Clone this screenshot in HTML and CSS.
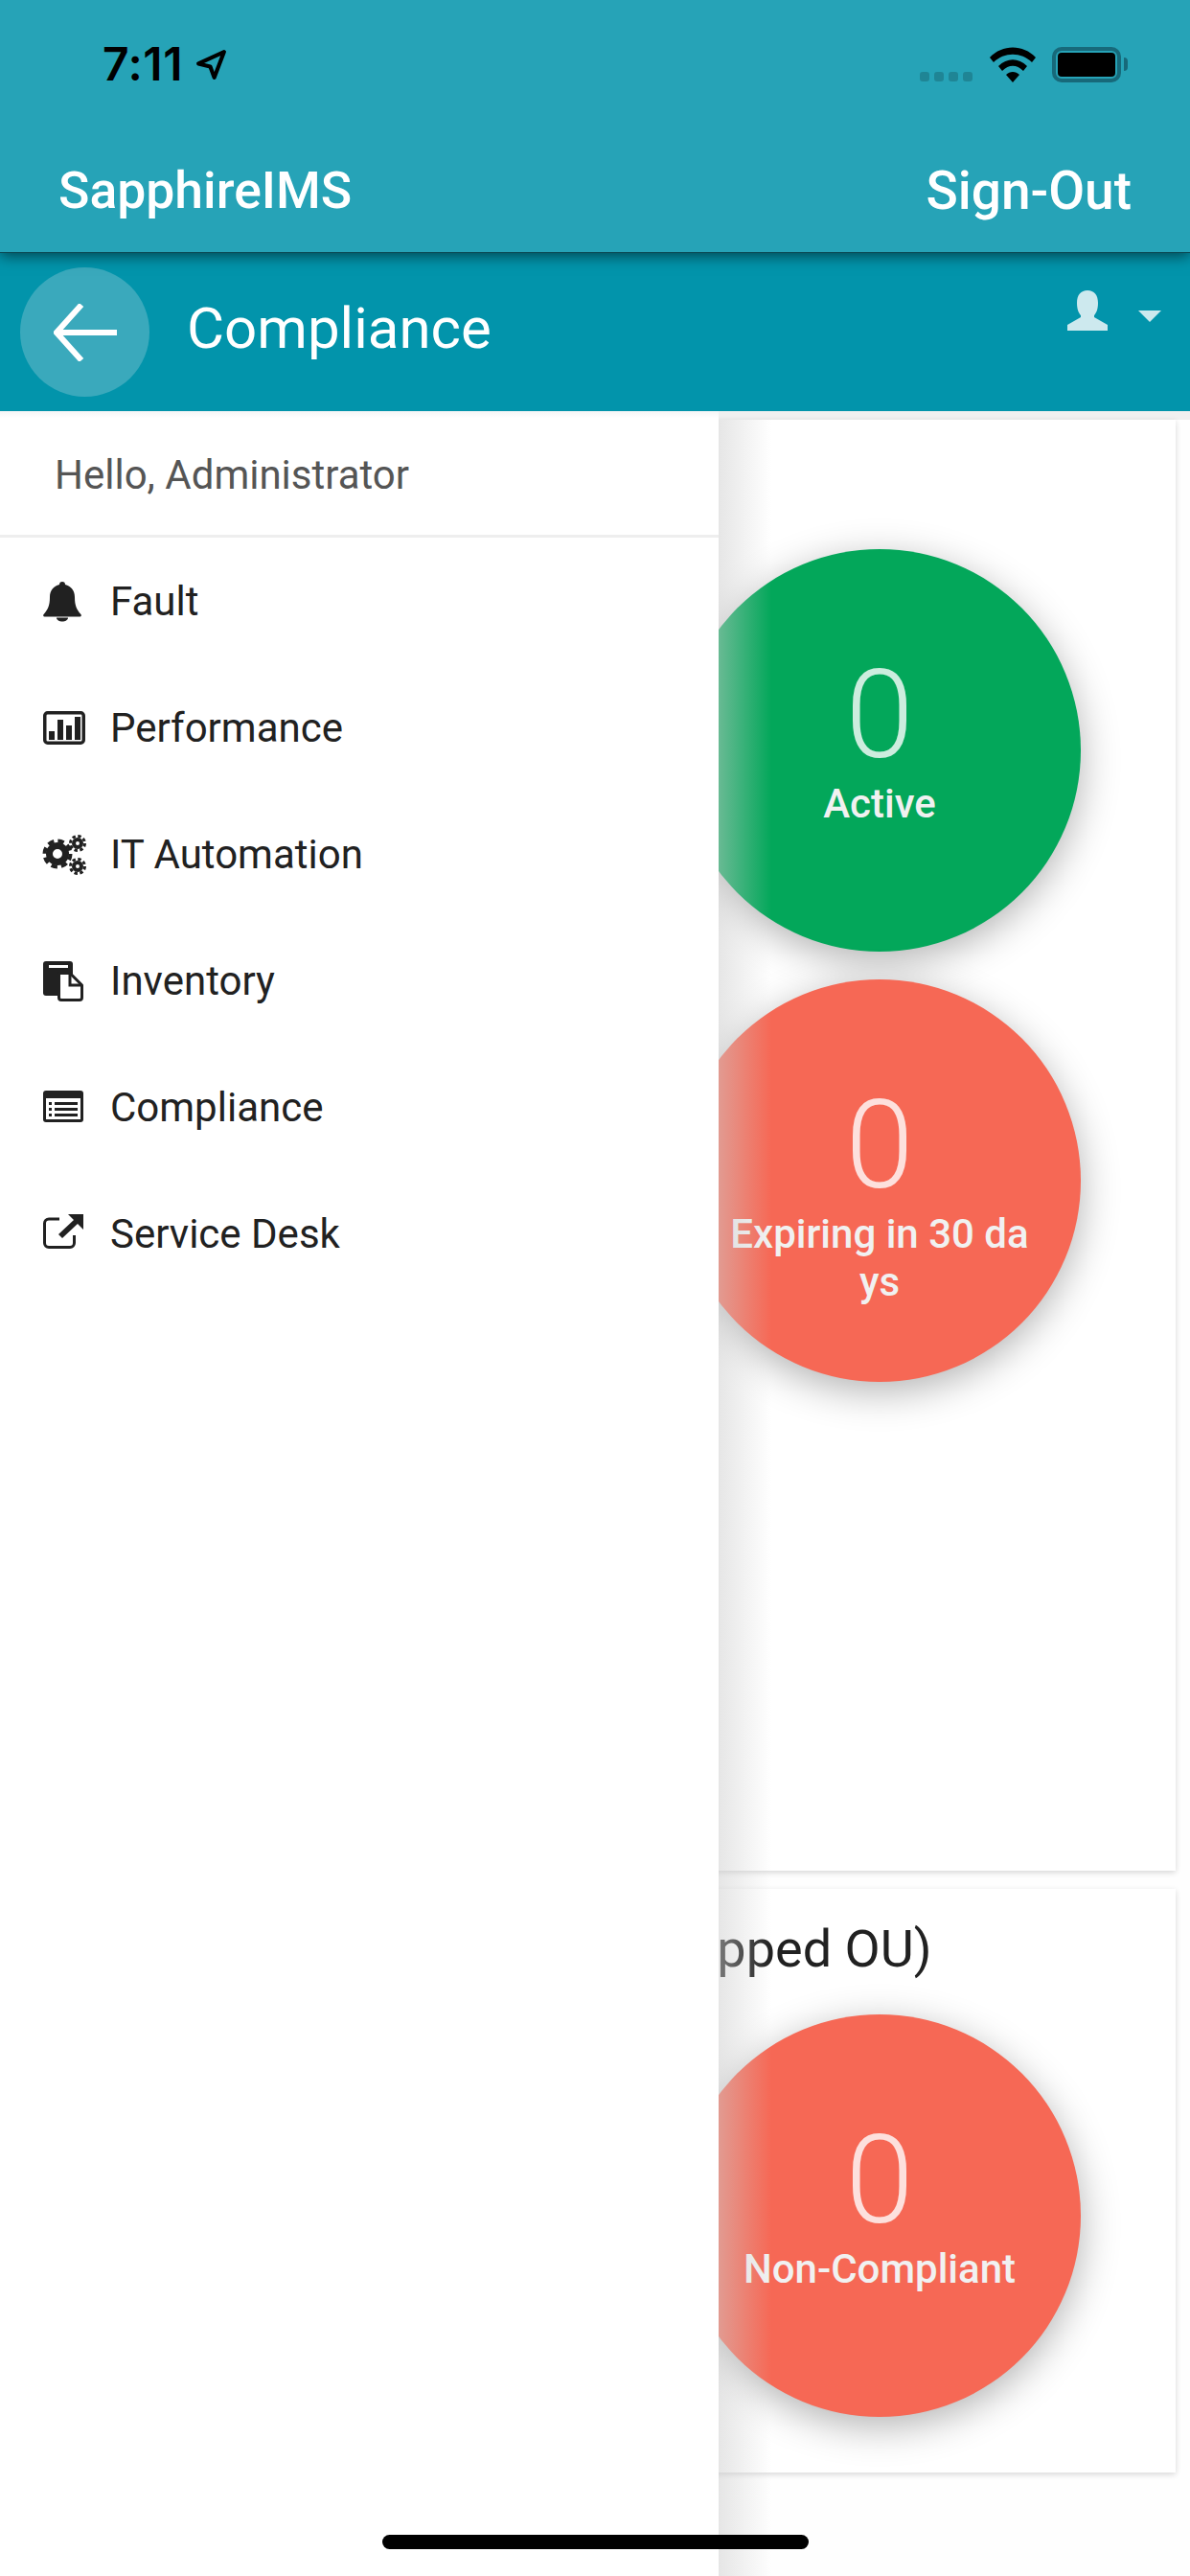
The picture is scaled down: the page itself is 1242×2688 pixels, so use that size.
FILE: index.html
```html
<!DOCTYPE html>
<html lang="en">
<head>
    <meta charset="UTF-8">
    <meta name="viewport" content="width=device-width, initial-scale=1.0">
    <title>SapphireIMS - Compliance</title>
    <link rel="stylesheet" href="styles.css">
</head>
<body>
    <div class="app">
        <header class="topbar">
            <div class="status">
                <div class="clock">
                    <span>7:11</span>
                    <svg class="loc" viewBox="0 0 32 32"><path d="M29 3 L3 15 L15 18 L19 29 Z" fill="none" stroke="#000" stroke-width="4" stroke-linejoin="round"/></svg>
                </div>
                <div class="status-right">
                    <div class="signal"><i></i><i></i><i></i><i></i></div>
                    <svg class="wifi" viewBox="0 0 50 37">
                        <path d="M1 11 C14 -3 36 -3 49 11 L45 16 C34 5 16 5 5 16 Z"/>
                        <path d="M10 20 C19 11 31 11 40 20 L36 25 C29 18 21 18 14 25 Z"/>
                        <path d="M18 29 C22 25 28 25 32 29 L25 37 Z"/>
                    </svg>
                    <div class="battery"><b></b></div>
                    <div class="battery-cap"></div>
                </div>
            </div>
            <div class="brand-row">
                <span>SapphireIMS</span>
                <span class="sign-out">Sign-Out</span>
            </div>
        </header>

        <div class="subbar">
            <div class="back">
                <svg viewBox="0 0 66 60" width="66" height="60"><path d="M66 30 H3 M29 1 L3 30 L29 59" fill="none" stroke="#fff" stroke-width="6"/></svg>
            </div>
            <h1>Compliance</h1>
            <div class="user">
                <svg viewBox="0 0 42 42" width="42" height="42"><path d="M21 0 C28 0 32 5 32 13 C32 20 30 24 28 26 V28 L42 36 V42 H0 V36 L14 28 V26 C12 24 10 20 10 13 C10 5 14 0 21 0 Z" fill="#cde9ee"/></svg>
                <div class="caret"></div>
            </div>
        </div>

        <main class="content">
            <section class="card card-top">
                <div class="gauges">
                    <div class="gauge green"><strong>0</strong><span>Active</span></div>
                    <div class="gauge red"><strong>0</strong><span>Expiring in 30 da<br>ys</span></div>
                </div>
            </section>
            <section class="card card-bottom">
                <h2>Compliance (Mapped OU)</h2>
                <div class="gauges">
                    <div class="gauge red"><strong>0</strong><span>Non-Compliant</span></div>
                </div>
            </section>
        </main>

        <nav class="drawer">
            <div class="hello">Hello, Administrator</div>
            <a class="item">
                <svg viewBox="-1 -3 46 46"><path d="M20 0 C18 0 17 1.2 17 3 C11 4.5 7 9 7 16 C7 25 5 29 .6 34 C-.3 35 .3 36.5 1.5 36.5 H38.5 C39.7 36.5 40.3 35 39.4 34 C35 29 33 25 33 16 C33 9 29 4.5 23 3 C23 1.2 22 0 20 0 Z" fill="#212121"/><path d="M14 37.5 C14 40 17 41.5 20 41.5 C23 41.5 26 40 26 37.5 Z" fill="#212121"/></svg>
                Fault
            </a>
            <a class="item">
                <svg viewBox="-1 -6 46 46"><rect x="1.75" y="1.75" width="40.5" height="31.5" rx="3" fill="none" stroke="#212121" stroke-width="3.5"/><path d="M6 21h6v9H6zM15 9h6v21h-6zM24 15h6v15h-6zM33 6h6v24h-6z" fill="#212121"/></svg>
                Performance
            </a>
            <a class="item">
                <svg viewBox="-1 -3 46 46">
                    <circle cx="15" cy="20" r="8.5" fill="none" stroke="#212121" stroke-width="7"/>
                    <circle cx="15" cy="20" r="13.5" fill="none" stroke="#212121" stroke-width="4" stroke-dasharray="6.5 4.1"/>
                    <circle cx="36" cy="9" r="4" fill="none" stroke="#212121" stroke-width="4"/>
                    <circle cx="36" cy="9" r="7.5" fill="none" stroke="#212121" stroke-width="3" stroke-dasharray="3.4 2.5"/>
                    <circle cx="36" cy="33" r="4" fill="none" stroke="#212121" stroke-width="4"/>
                    <circle cx="36" cy="33" r="7.5" fill="none" stroke="#212121" stroke-width="3" stroke-dasharray="3.4 2.5"/>
                </svg>
                IT Automation
            </a>
            <a class="item">
                <svg viewBox="-1 -3 46 46"><rect width="31" height="36" rx="3" fill="#212121"/><rect x="6" y="4" width="20" height="3" fill="#fff"/><path d="M16.5 12.5 H28 L40.5 25 V38 C40.5 39.5 39.5 40.5 38 40.5 H19 C17.5 40.5 16.5 39.5 16.5 38 Z" fill="#fff" stroke="#212121" stroke-width="3" stroke-linejoin="round"/><path d="M28 12.5 V25 H40.5" fill="none" stroke="#212121" stroke-width="3"/></svg>
                Inventory
            </a>
            <a class="item">
                <svg viewBox="-1 -6 46 46"><rect width="42" height="33" rx="3" fill="#212121"/><rect x="3" y="8" width="36" height="22" fill="#fff"/><path d="M6 12h3v3H6zM12 12h24v3H12zM6 18h3v3H6zM12 18h24v3H12zM6 24h3v3H6zM12 24h24v3H12z" fill="#212121"/></svg>
                Compliance
            </a>
            <a class="item">
                <svg viewBox="-1 -3 46 46"><path d="M17 5 H6 C3.5 5 1.5 7 1.5 9.5 V30 C1.5 32.5 3.5 34.5 6 34.5 H28 C30.5 34.5 32.5 32.5 32.5 30 V22" fill="none" stroke="#212121" stroke-width="3"/><path d="M42 0 V16 L36 10 L20 25 L16 21 L32 6 L26 0 Z" fill="#212121"/></svg>
                Service Desk
            </a>
        </nav>
        <div class="drawer-shade"></div>
        <div class="home-bar"></div>
    </div>
</body>
</html>
```
FILE: styles.css
```css
* {
    box-sizing: border-box;
}
body {
    margin: 0;
    font-family: Roboto, Arial, sans-serif;
    background-color: #fff;
}
.app {
    position: relative;
    width: 1242px;
    height: 2688px;
    overflow: hidden;
    display: flex;
    flex-direction: column;
}
.topbar {
    height: 264px;
    background-color: #26a3b7;
    position: relative;
    z-index: 3;
    box-shadow: 0 3px 14px rgba(0,0,0,0.55);
    border-bottom: 1px solid #0a4a55;
}
.status {
    height: 136px;
    padding: 44px 65px 0 107px;
    display: flex;
    justify-content: space-between;
    align-items: flex-start;
}
.clock {
    display: flex;
    align-items: center;
    gap: 13px;
    font-family: Inter, Arial, sans-serif;
    font-size: 48px;
    line-height: 46px;
    letter-spacing: 0.5px;
    font-weight: 600;
    color: #000;
}
.loc {
    width: 33px;
    height: 33px;
}
.status-right {
    display: flex;
    align-items: flex-start;
    padding-top: 5px;
}
.signal {
    display: flex;
    gap: 5px;
    margin: 26px 17px 0 0;
}
.signal i {
    width: 10px;
    height: 10px;
    border-radius: 3px;
    background-color: #1f8595;
}
.wifi {
    width: 50px;
    height: 37px;
    margin-right: 16px;
}
.battery {
    width: 72px;
    height: 37px;
    border: 4px solid #17697a;
    border-radius: 10px;
    padding: 2px;
}
.battery b {
    display: block;
    height: 100%;
    background-color: #000;
    border-radius: 4px;
}
.battery-cap {
    width: 4px;
    height: 14px;
    margin: 11px 0 0 3px;
    background-color: #17697a;
    border-radius: 0 4px 4px 0;
}
.brand-row {
    display: flex;
    justify-content: space-between;
    padding: 31px 61px 0 61px;
    color: #fff;
    font-size: 53.5px;
    font-weight: 500;
}
.sign-out {
    font-size: 55px;
}
.subbar {
    height: 165px;
    background-color: #0294ab;
    display: flex;
    align-items: flex-start;
    color: #fff;
    position: relative;
    z-index: 2;
}
.back {
    width: 135px;
    height: 135px;
    margin: 15px 0 0 21px;
    border-radius: 50%;
    background-color: #3aa9bc;
    display: flex;
    align-items: center;
    justify-content: center;
}
.subbar h1 {
    margin: 43px 0 0 39px;
    font-size: 60px;
    font-weight: 400;
}
.user {
    margin: 39px 30px 0 auto;
    display: flex;
    align-items: flex-start;
    gap: 32px;
}
.caret {
    width: 0;
    height: 0;
    margin-top: 21px;
    border-left: 12px solid transparent;
    border-right: 12px solid transparent;
    border-top: 12px solid #cde9ee;
}
.content {
    flex: 1;
    background: linear-gradient(#f0f0f0 9px, #fefefe 9px);
    padding: 9px 15px 0;
    display: flex;
    flex-direction: column;
    gap: 19px;
}
.card {
    background: white;
    box-shadow: 0 2px 6px rgba(0,0,0,0.16);
}
.card-top {
    height: 1514px;
    padding-top: 135px;
}
.card-bottom {
    height: 609px;
    position: relative;
}
.card h2 {
    margin: 31px 0 0 339px;
    font-size: 54px;
    font-weight: 400;
    color: #212121;
}
.card-bottom .gauges {
    margin-top: 37px;
}
.gauges {
    display: grid;
    grid-template-columns: 1fr 1fr;
    row-gap: 29px;
    padding-right: 8px;
}
.gauge {
    grid-column: 2;
    justify-self: center;
    width: 420px;
    height: 420px;
    border-radius: 50%;
    display: flex;
    flex-direction: column;
    align-items: center;
    color: #f1f1f1;
    text-align: center;
    box-shadow: 0 10px 40px rgba(0,0,0,0.3);
    padding-top: 113px;
}
.gauge strong {
    font-size: 128px;
    font-weight: 300;
    line-height: 120px;
    color: #fff;
    opacity: 0.8;
}
.gauge span {
    font-size: 42px;
    font-weight: 500;
    line-height: 50px;
    margin-top: 8px;
}
.green {
    background-color: #03a75a;
}
.red {
    background-color: #f66855;
}
.drawer {
    position: absolute;
    left: 0;
    top: 429px;
    bottom: 0;
    width: 750px;
    background-color: #fff;
    z-index: 1;
}
.drawer-shade {
    position: absolute;
    left: 750px;
    top: 438px;
    bottom: 0;
    width: 55px;
    background: linear-gradient(to right, rgba(205,205,205,0.5), rgba(225,225,225,0));
    z-index: 1;
}
.hello {
    height: 132px;
    border-bottom: 3px solid #eee;
    padding: 42px 0 0 57px;
    color: #555;
    font-size: 42px;
    background: linear-gradient(#f4f5f6, #fff 7px);
}
.item {
    height: 132px;
    display: flex;
    align-items: center;
    color: #212121;
    font-size: 42px;
    padding-left: 115px;
    position: relative;
}
.item svg {
    position: absolute;
    left: 44px;
    top: 43px;
    width: 46px;
    height: 46px;
}
.home-bar {
    position: absolute;
    left: 399px;
    bottom: 28px;
    width: 445px;
    height: 15px;
    border-radius: 8px;
    background-color: #000;
    z-index: 4;
}
```
